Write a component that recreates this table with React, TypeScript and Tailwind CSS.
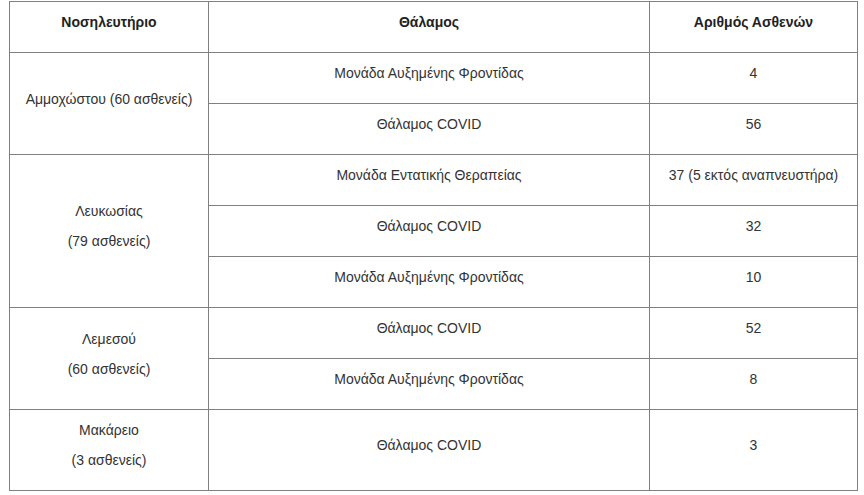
import React from 'react';

type Row = { ward: string; count: string };
type Hospital = { name: string[]; rows: Row[] };

const hospitals: Hospital[] = [
  {
    name: ['Αμμοχώστου (60 ασθενείς)'],
    rows: [
      { ward: 'Μονάδα Αυξημένης Φροντίδας', count: '4' },
      { ward: 'Θάλαμος COVID', count: '56' },
    ],
  },
  {
    name: ['Λευκωσίας', '(79 ασθενείς)'],
    rows: [
      { ward: 'Μονάδα Εντατικής Θεραπείας', count: '37 (5 εκτός αναπνευστήρα)' },
      { ward: 'Θάλαμος COVID', count: '32' },
      { ward: 'Μονάδα Αυξημένης Φροντίδας', count: '10' },
    ],
  },
  {
    name: ['Λεμεσού', '(60 ασθενείς)'],
    rows: [
      { ward: 'Θάλαμος COVID', count: '52' },
      { ward: 'Μονάδα Αυξημένης Φροντίδας', count: '8' },
    ],
  },
  {
    name: ['Μακάρειο', '(3 ασθενείς)'],
    rows: [{ ward: 'Θάλαμος COVID', count: '3' }],
  },
];

const cell = 'border border-[#808080] p-[10px] text-center align-middle';

export default function App() {
  return (
    <div
      className="min-h-screen bg-white pl-[9px] pt-[1px] text-[14px] text-[#333]"
      style={{ fontFamily: '"Liberation Sans", Arial, sans-serif' }}
    >
      <table className="w-[849px] border-collapse border border-[#333]">
        <colgroup>
          <col className="w-[199px]" />
          <col className="w-[441px]" />
          <col />
        </colgroup>
        <thead>
          <tr>
            {['Νοσηλευτήριο', 'Θάλαμος', 'Αριθμός Ασθενών'].map((h) => (
              <th key={h} className={`${cell} font-bold text-[#222]`}>
                <p className="mb-[10px] leading-[20px]">{h}</p>
              </th>
            ))}
          </tr>
        </thead>
        <tbody>
          {hospitals.map((h) =>
            h.rows.map((r, i) => (
              <tr key={h.name[0] + i}>
                {i === 0 && (
                  <td rowSpan={h.rows.length} className={cell}>
                    {h.name.map((line) => (
                      <p key={line} className="mb-[10px] leading-[20px]">
                        {line}
                      </p>
                    ))}
                  </td>
                )}
                <td className={cell}>
                  <p className="mb-[10px] leading-[20px]">{r.ward}</p>
                </td>
                <td className={cell}>
                  <p className="mb-[10px] leading-[20px]">{r.count}</p>
                </td>
              </tr>
            ))
          )}
        </tbody>
      </table>
    </div>
  );
}
